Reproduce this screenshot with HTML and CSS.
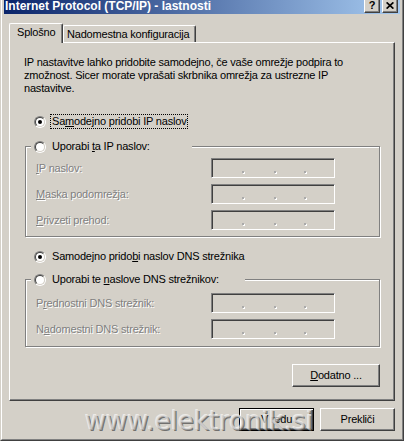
FILE: index.html
```html
<!DOCTYPE html>
<html lang="sl">
<head>
<meta charset="utf-8">
<title>Internet Protocol (TCP/IP) - lastnosti</title>
<link rel="stylesheet" href="styles.css">
</head>
<body>
<div class="window">
  <div class="frame">
    <div class="titlebar">
      <span class="title">Internet Protocol (TCP/IP) - lastnosti</span>
      <div class="caption-btns">
        <span class="cap-btn help">?</span>
        <span class="cap-btn close"><svg width="8" height="7" viewBox="0 0 8 7"><path d="M0.6 0.4 L7.4 6.6 M7.4 0.4 L0.6 6.6" stroke="#000" stroke-width="1.7" fill="none"/></svg></span>
      </div>
    </div>

    <div class="tabs">
      <div class="tab active">Splošno</div>
      <div class="tab">Nadomestna konfiguracija</div>
    </div>

    <div class="panel">
      <p class="intro">IP nastavitve lahko pridobite samodejno, če vaše omrežje podpira to<br>zmožnost. Sicer morate vprašati skrbnika omrežja za ustrezne IP<br>nastavitve.</p>

      <div class="opt opt-first">
        <span class="radio"><span class="radio-in"><span class="dot"></span></span></span>
        <span class="rlabel focus">Sa<u>m</u>odejno pridobi IP naslov</span>
      </div>

      <fieldset class="group g1">
        <legend class="opt legend l1">
          <span class="radio"><span class="radio-in"></span></span>
          <span class="rlabel">Uporabi <u>t</u>a IP naslov:</span>
        </legend>
        <div class="fields">
          <span class="flabel"><u>I</u>P naslov:</span>
          <span class="ipbox"><span></span><span class="ipdot"></span><span></span><span class="ipdot"></span><span></span><span class="ipdot"></span><span></span></span>
          <span class="flabel"><u>M</u>aska podomrežja:</span>
          <span class="ipbox"><span></span><span class="ipdot"></span><span></span><span class="ipdot"></span><span></span><span class="ipdot"></span><span></span></span>
          <span class="flabel"><u>P</u>rivzeti prehod:</span>
          <span class="ipbox"><span></span><span class="ipdot"></span><span></span><span class="ipdot"></span><span></span><span class="ipdot"></span><span></span></span>
        </div>
      </fieldset>

      <div class="opt opt-dns">
        <span class="radio"><span class="radio-in"><span class="dot"></span></span></span>
        <span class="rlabel">Samodejno prido<u>b</u>i naslov DNS strežnika</span>
      </div>

      <fieldset class="group g2">
        <legend class="opt legend l2">
          <span class="radio"><span class="radio-in"></span></span>
          <span class="rlabel">Uporabi te <u>n</u>aslove DNS strežnikov:</span>
        </legend>
        <div class="fields">
          <span class="flabel">P<u>r</u>ednostni DNS strežnik:</span>
          <span class="ipbox"><span></span><span class="ipdot"></span><span></span><span class="ipdot"></span><span></span><span class="ipdot"></span><span></span></span>
          <span class="flabel">N<u>a</u>domestni DNS strežnik:</span>
          <span class="ipbox"><span></span><span class="ipdot"></span><span></span><span class="ipdot"></span><span></span><span class="ipdot"></span><span></span></span>
        </div>
      </fieldset>

      <button class="btn wide extra"><u>D</u>odatno ...</button>
    </div>

    <div class="dialog-btns">
      <button class="btn default">V redu</button>
      <button class="btn">Prekliči</button>
    </div>
  </div>
  <div class="watermark">www.elektronik.si</div>
</div>
</body>
</html>
```
FILE: styles.css
```css
* { box-sizing: border-box; }

html, body {
  margin: 0;
  padding: 0;
}

body {
  width: 404px;
  height: 441px;
  overflow: hidden;
  background: #D4D0C8;
  font-family: "Liberation Sans", Arial, sans-serif;
  font-size: 11px;
  line-height: 13px;
  letter-spacing: -0.2px;
  color: #000;
}

.window {
  position: relative;
  width: 404px;
  height: 441px;
  border-left: 1px solid #D4D0C8;
  border-right: 1px solid #404040;
  border-bottom: 1px solid #404040;
}

.frame {
  height: 100%;
  border-left: 1px solid #fff;
  border-right: 1px solid #808080;
  border-bottom: 1px solid #808080;
  padding: 0 2px 2px;
  display: flex;
  flex-direction: column;
}

/* title bar */
.titlebar {
  height: 14px;
  flex: none;
  background: linear-gradient(to right, #0A246A, #A6CAF0);
  display: flex;
  justify-content: space-between;
  align-items: flex-start;
  padding: 0 2px 0 1px;
}

.title {
  color: #fff;
  font-weight: bold;
  font-size: 12px;
  line-height: 12px;
  letter-spacing: 0;
  white-space: nowrap;
}

.caption-btns {
  display: flex;
  gap: 2px;
}

.cap-btn {
  width: 16px;
  height: 13px;
  background: #D4D0C8;
  border-left: 1px solid #fff;
  border-right: 1px solid #404040;
  border-bottom: 1px solid #404040;
  box-shadow: inset -1px -1px #808080;
  display: flex;
  align-items: center;
  justify-content: center;
}

.help {
  font-weight: bold;
  font-size: 11px;
  line-height: 11px;
  letter-spacing: 0;
  padding-bottom: 1px;
}

.close svg { display: block; margin-bottom: 1px; }

/* tabs */
.tabs {
  display: flex;
  align-items: flex-end;
  padding: 9px 0 0 5px;
  position: relative;
  z-index: 1;
  flex: none;
}

.tab {
  width: 133px;
  height: 17px;
  padding: 2px 0 0 3px;
  border-top: 1px solid #fff;
  border-left: 1px solid #fff;
  border-right: 1px solid #404040;
  box-shadow: inset -1px 0 #808080;
  border-radius: 2px 2px 0 0;
  white-space: nowrap;
}

.tab.active {
  width: 54px;
  height: 20px;
  margin-bottom: -1px;
  padding: 2px 0 0 7px;
  background: #D4D0C8;
}

/* panel */
.panel {
  height: 359px;
  flex: none;
  margin: 0 5px;
  border-top: 1px solid #fff;
  border-left: 1px solid #fff;
  border-right: 1px solid #404040;
  border-bottom: 1px solid #404040;
  box-shadow: inset -1px -1px #808080;
  padding: 13px 14px 0 14px;
  display: flex;
  flex-direction: column;
  align-items: flex-start;
}

.intro {
  margin: 0;
  white-space: nowrap;
}

.opt {
  display: flex;
  align-items: center;
  height: 15px;
}

.opt-first { margin: 19px 0 0 10px; }
.opt-dns { margin: 12px 0 0 10px; }

.radio {
  width: 12px;
  height: 12px;
  flex: none;
  border-radius: 50%;
  border: 1px solid;
  border-color: #808080 #fff #fff #808080;
}

.radio-in {
  display: flex;
  align-items: center;
  justify-content: center;
  width: 100%;
  height: 100%;
  border-radius: 50%;
  border: 1px solid;
  border-color: #404040 #D4D0C8 #D4D0C8 #404040;
  background: #fff;
}

.dot {
  width: 4px;
  height: 4px;
  border-radius: 50%;
  background: #000;
}

.rlabel {
  margin-left: 4px;
  padding: 0 1px;
  border: 1px dotted transparent;
  line-height: 13px;
  white-space: nowrap;
}

.rlabel.focus { border-color: #000; }

/* group boxes */
.group {
  width: 355px;
  min-width: 0;
  margin: 0 0 0 1px;
  border: 1px solid #808080;
  box-shadow: inset 1px 1px #fff, 1px 1px #fff;
}

.g1 { margin-top: 10px; padding: 4px 0 6px 0; }
.g2 { margin-top: 8px; padding: 6px 0 7px 0; }

.legend {
  margin-left: 5px;
  padding: 0 0 0 3px;
  background: #D4D0C8;
}

.l1 { width: 161px; }
.l2 { width: 214px; }

.fields {
  display: grid;
  grid-template-columns: 175px 124px;
  grid-auto-rows: 20px;
  row-gap: 6px;
  align-items: center;
  padding-left: 10px;
}

.flabel {
  color: #808080;
  text-shadow: 1px 1px 0 #fff;
  white-space: nowrap;
}

.ipbox {
  height: 20px;
  border: 1px solid;
  border-color: #808080 #fff #fff #808080;
  box-shadow: inset 1px 1px #404040;
  display: grid;
  grid-template-columns: 29px 4px 28px 4px 26px 4px 1fr;
  align-items: start;
}

.ipdot {
  width: 2px;
  height: 2px;
  margin: 12px 0 0 1px;
  background: #aaa;
  box-shadow: 1px 1px 0 #fff;
}

/* buttons */
.btn {
  font: inherit;
  letter-spacing: inherit;
  color: #000;
  background: #D4D0C8;
  width: 75px;
  height: 23px;
  padding: 0;
  border: 1px solid;
  border-color: #fff #404040 #404040 #fff;
  box-shadow: inset -1px -1px #808080;
  border-radius: 0;
}

.btn.wide { width: 88px; }

.extra {
  margin-top: 17px;
  align-self: flex-end;
}

.btn.default {
  border-color: #000;
  box-shadow: inset 1px 1px #fff, inset -1px -1px #404040, inset -2px -2px #808080;
}

.dialog-btns {
  display: flex;
  justify-content: flex-end;
  gap: 6px;
  margin: 7px 5px 0 0;
}

/* watermark overlay */
.watermark {
  position: absolute;
  left: 84px;
  top: 408px;
  font-family: "DejaVu Sans", sans-serif;
  font-size: 26px;
  line-height: 26px;
  letter-spacing: 0;
  white-space: nowrap;
  color: rgba(205, 205, 205, 0.55);
  text-shadow: -1px -1px 0 rgba(255, 255, 255, 0.6), 1px 1px 0 rgba(80, 80, 80, 0.75);
  pointer-events: none;
}
```
